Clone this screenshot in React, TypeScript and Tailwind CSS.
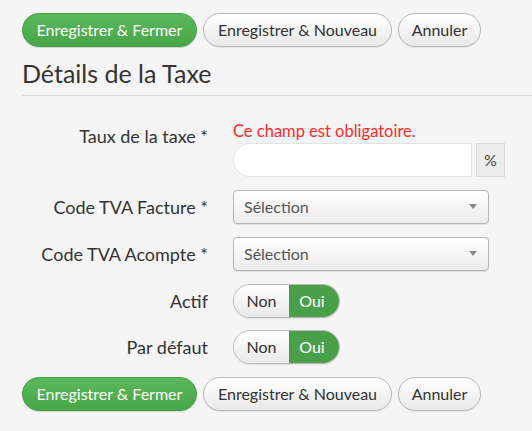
import React from "react";

const font = { fontFamily: '"Lato", "Open Sans", sans-serif' };

function ActionBar() {
  return (
    <div className="flex gap-[6px]">
      <button className="h-[34px] w-[175px] rounded-full border border-[#45a045] bg-gradient-to-b from-[#5cb85c] to-[#48a548] text-[16px] text-white shadow-[0_1px_1px_rgba(0,0,0,0.15)]">
        Enregistrer &amp; Fermer
      </button>
      <button className="h-[34px] w-[189px] rounded-full border border-[#b8b8b8] bg-gradient-to-b from-white to-[#e9e9e9] text-[16px] text-[#333] shadow-[0_1px_1px_rgba(0,0,0,0.08)]">
        Enregistrer &amp; Nouveau
      </button>
      <button className="h-[34px] w-[83px] rounded-full border border-[#b8b8b8] bg-gradient-to-b from-white to-[#e9e9e9] text-[16px] text-[#333] shadow-[0_1px_1px_rgba(0,0,0,0.08)]">
        Annuler
      </button>
    </div>
  );
}

function Select() {
  return (
    <div className="relative flex h-[34px] w-[256px] items-center rounded-[4px] border border-[#b5b5b5] bg-gradient-to-b from-white to-[#ececec] pl-[10px] text-[16px] text-[#555] shadow-[0_1px_1px_rgba(0,0,0,0.08)]">
      Sélection
      <span className="absolute right-[11px] top-[13px] h-0 w-0 border-x-[4px] border-t-[5px] border-x-transparent border-t-[#888]" />
    </div>
  );
}

function Toggle() {
  return (
    <div className="flex h-[34px] w-[107px] overflow-hidden rounded-full border border-[#b8b8b8] text-[16px] shadow-[0_1px_1px_rgba(0,0,0,0.08)]">
      <div className="flex w-[55px] items-center justify-center bg-gradient-to-b from-white to-[#e9e9e9] text-[#333]">
        Non
      </div>
      <div className="flex flex-1 items-center justify-center bg-[#4a9f4a] pr-[4px] text-white">
        Oui
      </div>
    </div>
  );
}

function Row({ label, children, top = false }: { label: string; children: React.ReactNode; top?: boolean }) {
  return (
    <div className={`flex gap-[25px] ${top ? "items-start" : "items-center"}`}>
      <div className={`w-[186px] text-right text-[18px] leading-[20px] text-[#333] ${top ? "pt-[5px]" : ""}`}>{label}</div>
      <div>{children}</div>
    </div>
  );
}

export default function App() {
  return (
    <div className="h-[431px] w-[532px] overflow-hidden bg-[#f5f5f5] pt-[13px]" style={font}>
      <div className="pl-[22px]">
        <ActionBar />
        <h1 className="mt-[11px] text-[25px] leading-[30px] text-[#333]">Détails de la Taxe</h1>
      </div>
      <div className="ml-[22px] mt-[7px] border-t border-[#dcdcdc]" />
      <div className="mt-[25px] flex flex-col gap-[13px] pl-[22px]">
        <Row label="Taux de la taxe *" top>
          <div className="text-[16.5px] leading-[20px] text-[#ff2a2a]">Ce champ est obligatoire.</div>
          <div className="mt-[2px] flex gap-[4px]">
            <div className="h-[34px] w-[239px] rounded-l-full border border-[#e4e4e4] bg-white" />
            <div className="flex h-[34px] w-[29px] items-center justify-center border border-[#dadada] bg-[#ececec] text-[16px] text-[#444]">
              %
            </div>
          </div>
        </Row>
        <Row label="Code TVA Facture *">
          <Select />
        </Row>
        <Row label="Code TVA Acompte *">
          <Select />
        </Row>
        <Row label="Actif">
          <Toggle />
        </Row>
        <div className="-mt-[1px]">
          <Row label="Par défaut">
            <Toggle />
          </Row>
        </div>
        <ActionBar />
      </div>
    </div>
  );
}
